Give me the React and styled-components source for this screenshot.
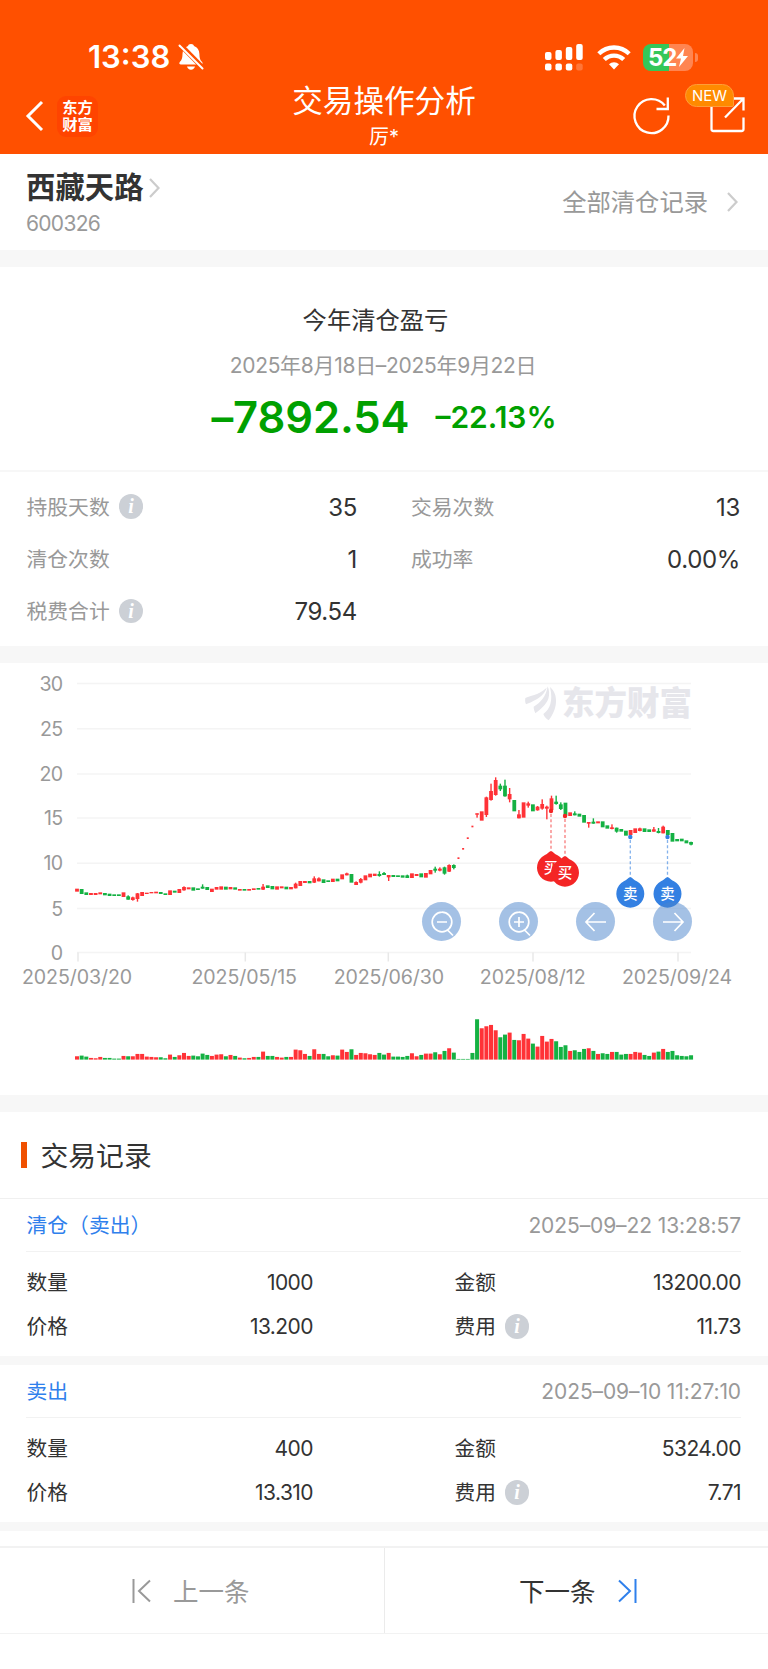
import React from "react";
import styled, { createGlobalStyle } from "styled-components";

const GlobalStyle = createGlobalStyle`
  * { box-sizing: border-box; }
  body {
    margin: 0;
    background: #fff;
    color: #333;
    font-family: Inter, "Noto Sans CJK SC", sans-serif;
  }
`;

const Page = styled.div`
  width: 768px;
  height: 1669px;
  overflow: hidden;
  background: #fff;
`;

const Icon = styled.svg`
  display: block;
  flex: none;
  overflow: visible;
`;

const Spacer = styled.span`
  width: ${(p) => p.$w}px;
  flex: none;
`;

/* ---------- header ---------- */

const Header = styled.header`
  height: 154px;
  background: #ff5000;
  color: #fff;
`;

const StatusBar = styled.div`
  height: 78px;
  padding: 36px 71px 0 88px;
  display: flex;
  justify-content: space-between;
`;

const StatusGroup = styled.div`
  height: 42px;
  display: flex;
  align-items: center;
`;

const Clock = styled.span`
  width: 90px;
  font-size: 31px;
  font-weight: 600;
  line-height: 42px;
`;

const Battery = styled.div`
  position: relative;
  width: 49.5px;
  height: 27px;
  border-radius: 8px;
  background: linear-gradient(90deg, #34c759 52%, #ff8551 52%);
  display: flex;
  align-items: center;
  padding-left: 5px;
  font-size: 24px;
  font-weight: 700;
  letter-spacing: -1.2px;

  &::after {
    content: "";
    position: absolute;
    right: -5px;
    top: 9px;
    width: 3px;
    height: 9px;
    border-radius: 0 4px 4px 0;
    background: #ff8551;
  }
`;

const NavBar = styled.div`
  height: 76px;
  display: grid;
  grid-template-columns: 200px 1fr 200px;
`;

const NavLeft = styled.div`
  display: flex;
  align-items: center;
  gap: 14px;
  height: 76px;
  padding: 0 0 0 26px;
`;

const BrandTile = styled.div`
  width: 41px;
  height: 41px;
  border-radius: 9px;
  background: #ff4400;
  display: flex;
  flex-direction: column;
  align-items: center;
  justify-content: center;
  font: 700 15.3px/17px "Liberation Sans", "Noto Sans CJK SC", sans-serif;
`;

const NavTitles = styled.div`
  padding-top: 1px;
  text-align: center;
`;

const NavTitle = styled.div`
  font-size: 30.6px;
  line-height: 44px;
`;

const NavSubtitle = styled.div`
  font-size: 20px;
  line-height: 29px;
`;

const NavRight = styled.div`
  position: relative;
  display: flex;
  align-items: center;
  justify-content: flex-end;
  gap: 40px;
  height: 76px;
  padding: 0 23px 2px 0;
`;

const NewBadge = styled.span`
  position: absolute;
  left: 117px;
  top: 6px;
  width: 49px;
  height: 23px;
  border-radius: 12px 12px 2px 12px;
  background: #ff8a00;
  border: 1px solid #ff9d38;
  font-size: 15px;
  font-weight: 400;
  line-height: 21.5px;
  text-align: center;
`;

/* ---------- stock ---------- */

const StockBar = styled.section`
  height: 96px;
  padding: 0 30px 0 26px;
  display: flex;
  justify-content: space-between;
`;

const StockName = styled.div`
  height: 40px;
  margin-top: 14px;
  display: flex;
  align-items: center;
  gap: 5px;
  font-size: 29.4px;
  font-weight: 700;
  line-height: 40px;
`;

const StockCode = styled.div`
  margin-top: 1px;
  font-size: 21px;
  line-height: 29px;
  letter-spacing: -0.7px;
  color: #999;
`;

const AllRecords = styled.div`
  display: flex;
  align-items: center;
  gap: 19px;
  height: 96px;
  font-size: 24.3px;
  color: #999;
`;

const RaisedText = styled.span`
  padding-bottom: ${(p) => p.$by * 2}px;
`;

const Band = styled.div`
  height: ${(p) => p.$h}px;
  background: #f7f7f7;
`;

/* ---------- summary ---------- */

const Summary = styled.section`
  height: 205px;
  padding-top: 35px;
  border-bottom: 2px solid #f7f7f7;
  display: flex;
  flex-direction: column;
  align-items: center;
`;

const SummaryTitle = styled.div`
  padding-right: 17px;
  font-size: 24.3px;
  line-height: 36px;
`;

const SummaryRange = styled.div`
  margin-top: 13px;
  padding-right: 2px;
  font-size: 21px;
  line-height: 30px;
  letter-spacing: -0.3px;
  color: #999;
`;

const ProfitLine = styled.div`
  margin-top: 8px;
  height: 56px;
  display: flex;
  align-items: center;
  gap: 26px;
  color: #00a000;
  font-weight: 600;
`;

const Profit = styled.span`
  font-size: 43.5px;
  letter-spacing: -0.1px;
`;

const ProfitRate = styled.span`
  font-size: 30px;
`;

const Stats = styled.section`
  height: 174px;
  padding: 9px 28px 0 26px;
  display: grid;
  grid-template-columns: 331px 329.500px;
  grid-auto-rows: 52.2px;
  column-gap: 53.500px;
`;

const Stat = styled.div`
  display: flex;
  align-items: center;
  justify-content: space-between;
`;

const StatLabel = styled.span`
  display: flex;
  align-items: center;
  gap: 9px;
  padding: 0 0 1px 0.5px;
  font-size: 20.8px;
  color: #999;
`;

const StatValue = styled.span`
  font-size: 24px;
  letter-spacing: -0.35px;
`;

const InfoDot = styled.i`
  width: 24.5px;
  height: 24.5px;
  border-radius: 50%;
  background: #ccd0d6;
  color: #fff;
  font: italic 700 20px/24px "Liberation Serif", serif;
  text-align: center;
`;

/* ---------- chart ---------- */

const ChartCard = styled.section`
  position: relative;
  height: 432px;
`;

const ChartControls = styled.div`
  position: absolute;
  left: 422px;
  top: 239px;
  display: flex;
  gap: 38px;
`;

const ControlButton = styled.button`
  width: 39px;
  height: 39px;
  padding: 0;
  border: 0;
  border-radius: 50%;
  background: rgba(73, 132, 204, 0.5);
  display: grid;
  place-items: center;
`;

/* ---------- records ---------- */

const RecordsHeader = styled.div`
  height: 87px;
  padding-left: 21px;
  border-bottom: 1px solid #f0f0f0;
  display: flex;
  align-items: center;
  gap: 13.5px;
  font-size: 27.8px;

  &::before {
    content: "";
    width: 6px;
    height: 26px;
    background: #f05000;
  }
`;

const Record = styled.article`
  height: 157px;
  padding: 0 27px 0 26px;
`;

const RecordHead = styled.div`
  height: 53px;
  border-bottom: 1px solid #f2f2f2;
  display: flex;
  align-items: center;
  justify-content: space-between;
`;

const RecordKind = styled.span`
  padding: 0 0 2px 0.5px;
  font-size: 20.8px;
  color: #2f80ec;
`;

const RecordTime = styled.span`
  font-size: 21px;
  letter-spacing: -0.1px;
  color: #999;
`;

const RecordGrid = styled.div`
  padding-top: 9px;
  display: grid;
  grid-template-columns: 287px 287px;
  grid-auto-rows: 43.6px;
  column-gap: 141px;
`;

const RecordField = styled.div`
  display: flex;
  align-items: center;
  justify-content: space-between;
  font-size: 21px;
  letter-spacing: -0.55px;
`;

const FieldLabel = styled.span`
  display: flex;
  align-items: center;
  gap: 9px;
  padding-left: 0.5px;
  font-size: 20.7px;
  letter-spacing: 0;
`;

const Pager = styled.nav`
  height: 88px;
  margin-top: 15px;
  border-top: 2px solid #f2f2f2;
  border-bottom: 1px solid #f2f2f2;
  display: grid;
  grid-template-columns: 1fr 1fr;
`;

const PagerItem = styled.div`
  display: flex;
  align-items: center;
  padding-left: ${(p) => p.$inset}px;
  gap: 22px;
  font-size: 25.5px;
  color: ${(p) => p.$color};
  border-left: ${(p) => (p.$divided ? "1px solid #ebebeb" : "0")};
`;

/* ---------- data ---------- */

/* Distances are in thirds of a pixel below the top of the plot: open/close edges, then optional wick ends. */
const CANDLES = `r686-695 g687-702 g697-705 r699-705 r699-705 r697-703 g699-706 g701-708 g703-708 g703-708
r697-711 g709-719/706-719 r712-720/710-722 r700-717/699-725 r696-708 r698-702 r696-700 r695-700 g696-702 g700-705
r691-705 g692-698 r687-699 r681-691/679-692 r682-688 g682-692 g685-690 g680-686/673-686 g681-690 r686-696
r681-689 r679-689 g680-689 r681-688 g682-689 r687-692 g687-692 r687-692 r685-690 g684-689
r680-689/672-690 g676-684 g678-688 r679-689 r679-685 g680-688 r681-688 r671-685/668-685 r663-678 r663-669
g663-670 r655-668/649-669 r655-664/652-664 g658-669 g661-666 r656-666 g656-664 r643-658 r640-646/638-646 g642-668
r666-675/664-675 r657-668/654-670 r646-661 r641-652 r641-648 g642-648/634-650 g639-645/636-645 r645-652/645-663 g645-651 g646-651
g646-653 g646-654/644-654 r640-654 r642-648 g640-652 r639-653 r630-643 g626-632/620-638 r626-632/622-634 g622-641/620-644
r615-635/613-636 g615-624/613-628 r592-597 r564-569 r532-537 r497-502 r460-464/460-473 r454-482 r412-465/410-471 r393-420/371-422
r360-405/352-407 g377-388/371-393 g377-409/359-410 r402-418/384-427 g420-454 r463-475/450-475 r427-473 r430-437/425-443 g433-454 r440-451/438-452
r432-446/418-449 r440-446/437-478 r415-450/407-455 g425-432/407-434 g433-447/427-450 g428-467 r457-468 g460-466/454-466 g461-470 g465-488
r486-491/486-503 g485-491/475-491 r484-490 g484-502 g496-506 r502-507/493-508 g503-515/503-518 g507-515 g512-527 r510-525
r505-519 r505-513/503-514 g505-516 g508-516 r508-515/501-515 g513-519/504-520 r500-520/497-520 g510-525/510-529 g519-545 g537-544
g536-544 g541-550 g546-554/545-556`
  .split(/\s+/)
  .map((s) => {
    const [body, wick] = s.slice(1).split("/").map((r) => r.split("-").map(Number));
    return { up: s[0] === "r", body, wick };
  });

const VOLUMES = `r10 g12 g9 r5 r4 r8 g5 g5 g3 g3 r11 g10 r10 r17 r17 r9 r8 r7 g7 g4 r15 g8 r13 r20 r11 g12 g10 g18 g14 r11
r15 r16 g10 r14 g11 r6 g4 r5 r8 g8 r24 g11 g11 r8 r6 g8 r8 r30 r28 r17 g11 r31 r17 g17 g10 r13 g12 r30 r23 g31
r14 r20 r19 r16 r14 g20 g15 r20 g9 g9 g8 g11 r19 r10 g14 r18 r18 g22 r16 g26 r34 g21 g2 g2 g2 g20 g121 r94 r100 r104
r88 g67 g75 r81 g59 r58 r77 r63 g48 r39 r71 r54 r62 g55 g38 g43 r26 g28 g23 g32 r34 g26 r17 g19 g17 r23 g23 g15 g17 r17
r23 r21 g14 g11 r21 g24 r32 g23 g26 g13 g11 g10 g13`
  .split(/\s+/)
  .map((s) => ({ up: s[0] === "r", h: Number(s.slice(1)) / 3 }));

const GRID = [
  [30, 20.5],
  [25, 65.8],
  [20, 111],
  [15, 155],
  [10, 200.2],
  [5, 245.5],
  [0, 289.5],
];

const DATES = [
  ["2025/03/20", 78, 77],
  ["2025/05/15", 245.3, 244.2],
  ["2025/06/30", 388.3, 388.8],
  ["2025/08/12", 533, 532.7],
  ["2025/09/24", 678, 677],
];

const TRADES = [
  { x: 551, y: 148, text: "买", color: "#f42525" },
  { x: 565, y: 153, text: "买", color: "#f42525" },
  { x: 630.3, y: 174, text: "卖", color: "#3380e2" },
  { x: 667.5, y: 174, text: "卖", color: "#3380e2" },
];

const RED = "#ff3237";
const GREEN = "#14b143";
const barX = (i) => 77 + i * 4.652;

const RECORDS = [
  { kind: "清仓（卖出）", time: "2025–09–22 13:28:57", qty: "1000", amount: "13200.00", price: "13.200", fee: "11.73" },
  { kind: "卖出", time: "2025–09–10 11:27:10", qty: "400", amount: "5324.00", price: "13.310", fee: "7.71" },
];

const STATS = [
  ["持股天数", "35", true],
  ["交易次数", "13"],
  ["清仓次数", "1"],
  ["成功率", "0.00%"],
  ["税费合计", "79.54", true],
];

/* ---------- parts ---------- */

const Chevron = () => (
  <Icon width="11" height="20" viewBox="0 0 11 20" fill="none" stroke="#ccc" strokeWidth="2.2">
    <path d="M1 1l8.5 9L1 19" />
  </Icon>
);

const Info = () => <InfoDot>i</InfoDot>;

function BellOff() {
  return (
    <Icon width="26" height="28" viewBox="0 0 26 28">
      <path
        fill="#fff"
        d="M13 1c1.8 0 2.7.9 3 2 3.500 1.200 5.300 4.200 5.400 8 .1 4.500 1 6.300 2.700 8 1 1.200.4 2.500-1.100 2.500H3c-1.600 0-2.200-1.300-1.200-2.500 1.700-1.700 2.600-3.500 2.700-8 .1-3.800 2-6.800 5.500-8 .3-1.100 1.200-2 3-2zM9 23.500h8c-.5 2-2 3.200-4 3.200s-3.500-1.200-4-3.200z"
      />
      <path d="M2 1.500L26 26" stroke="#ff5000" strokeWidth="5" />
      <path d="M1.500 2.500L24.500 25.500" stroke="#fff" strokeWidth="2" strokeLinecap="round" />
    </Icon>
  );
}

function Signal() {
  const tops = [8, 6, 3, 0];
  return (
    <Icon width="39" height="27" viewBox="0 0 39 27" fill="#fff">
      {tops.map((t, i) => (
        <g key={t}>
          <rect x={i * 10.4} y={t} width="6.500" height={16 - t} rx="2" />
          <rect x={i * 10.4} y="19.500" width="6.500" height="7" rx="2" opacity={i === 3 ? 0.22 : 1} />
        </g>
      ))}
    </Icon>
  );
}

function Wifi() {
  return (
    <Icon width="34" height="25" viewBox="0 0 34 25" fill="none" stroke="#fff" strokeWidth="4.300">
      <path d="M1.800 8.800a21.500 21.500 0 0 1 30.400 0" />
      <path d="M7.300 14.600a13.700 13.700 0 0 1 19.400 0" />
      <path d="M12 19.300a7.100 7.100 0 0 1 10 0L17 24.500z" fill="#fff" stroke="none" />
    </Icon>
  );
}

function PriceChart() {
  return (
    <Icon width="768" height="432" viewBox="0 0 768 432" fontSize="19.600">
      {GRID.map(([label, y]) => (
        <g key={label}>
          <path d={`M77 ${y}H691`} stroke="#f4f4f4" strokeWidth="1.500" />
          <text x="62.500" y={y + 7} textAnchor="end" fill="#999" letterSpacing="-0.700">
            {label}
          </text>
        </g>
      ))}
      {DATES.map(([label, tick, x]) => (
        <g key={label}>
          <path d={`M${tick} 289.500v9`} stroke="#e8e8e8" strokeWidth="1.500" />
          <text x={x} y="320.800" textAnchor="middle" fill="#999" letterSpacing="-0.100">
            {label}
          </text>
        </g>
      ))}

      <g fill="#e6e6eb">
        <g transform="translate(500 7) scale(.33333)">
          <path d="M76 84C90 76 112 78 140 53C136 66 124 80 110 88C98 95 88 100 78 103C75 97 75 90 76 84z" />
          <path d="M143 49C148 60 149 74 145 86C138 104 122 117 106 130C103 122 101 117 101 110C122 98 138 80 143 49z" />
          <path d="M150 51C163 62 169 78 168 96C167 118 157 136 146 151C138 146 133 140 130 132C150 118 160 92 150 51z" />
        </g>
        <text x="562" y="51.500" fontFamily="Noto Sans CJK SC" fontSize="32.500" fontWeight="900">
          东方财富
        </text>
      </g>

      {CANDLES.map(({ up, body, wick }, i) => {
        const x = barX(i);
        const dot = i >= 82 && i <= 85;
        return (
          <g key={i} fill={up ? RED : GREEN}>
            <rect
              x={x - (dot ? 1 : 1.9)}
              y={body[0] / 3 - 3}
              width={dot ? 2 : 3.8}
              height={(body[1] - body[0]) / 3}
            />
            {wick && <rect x={x - 0.7} y={wick[0] / 3 - 3} width="1.400" height={(wick[1] - wick[0]) / 3} />}
          </g>
        );
      })}

      {VOLUMES.map(({ up, h }, i) => (
        <rect key={i} x={barX(i) - 2} y={396.6 - h} width="4" height={h} fill={up ? RED : GREEN} />
      ))}

      {TRADES.map(({ x, y, text, color }) => (
        <g key={x} fill={color}>
          <circle cx={x} cy={y} r="2.200" />
          <path d={`M${x} ${y + 3}v37`} stroke={color} strokeWidth="1.300" strokeDasharray="3 2.300" opacity=".6" />
          <path
            d={`M${x} ${y + 40}c1 0 4 3.200 6.500 4.300A14 14 0 1 1 ${x - 6.5} ${y + 44.3}c2.500-1.100 5.500-4.300 6.500-4.300z`}
          />
          <text
            x={x}
            y={y + 61.5}
            textAnchor="middle"
            fill="#fff"
            fontSize="14.500"
            fontWeight="500"
            fontFamily="Noto Sans CJK SC"
          >
            {text}
          </text>
        </g>
      ))}
    </Icon>
  );
}

const CONTROL_PATHS = {
  "zoom-out": "M9 11h10M20 19.500l5 5M14 1.200a9.800 9.800 0 1 0 0 19.600a9.800 9.800 0 1 0 0-19.600",
  "zoom-in": "M9 11h10M14 6v10M20 19.500l5 5M14 1.200a9.800 9.800 0 1 0 0 19.600a9.800 9.800 0 1 0 0-19.600",
  left: "M24 11H4M12.500 2L4 11l8.500 9",
  right: "M4 11h20M15.500 2l8.500 9-8.500 9",
};

export default function App() {
  return (
    <Page>
      <GlobalStyle />
      <Header>
        <StatusBar>
          <StatusGroup>
            <Clock>13:38</Clock>
            <BellOff />
          </StatusGroup>
          <StatusGroup>
            <Signal />
            <Spacer $w={12.5} />
            <Wifi />
            <Spacer $w={12.5} />
            <Battery>
              52
              <Icon width="12" height="19" viewBox="0 0 12 19" fill="#fff">
                <path d="M8.500 0L0 10.500h5L3 19l9-11H7z" />
              </Icon>
            </Battery>
            <Spacer $w={4.5} />
          </StatusGroup>
        </StatusBar>
        <NavBar>
          <NavLeft>
            <Icon width="17" height="30" viewBox="0 0 17 30" fill="none" stroke="#fff" strokeWidth="3">
              <path d="M16 1L2 15l14 14" />
            </Icon>
            <BrandTile>
              <span>东方</span>
              <span>财富</span>
            </BrandTile>
          </NavLeft>
          <NavTitles>
            <NavTitle>交易操作分析</NavTitle>
            <NavSubtitle>厉*</NavSubtitle>
          </NavTitles>
          <NavRight>
            <Icon width="37" height="36" viewBox="0 0 37 36" fill="none" stroke="#fff" strokeWidth="2.300">
              <path d="M35.500 18.500A17 17 0 1 1 31.800 8.500M34.800 .5V12H23.500" />
            </Icon>
            <Icon width="35" height="36" viewBox="0 0 35 36" fill="none" stroke="#fff" strokeWidth="2.300">
              <path d="M1.500 9v23a2 2 0 0 0 2 2h28a2 2 0 0 0 2-2V20.500M22 1.500h11.500V13.500M33 2L15 20.500" />
            </Icon>
            <NewBadge>NEW</NewBadge>
          </NavRight>
        </NavBar>
      </Header>

      <StockBar>
        <div>
          <StockName>
            西藏天路
            <Chevron />
          </StockName>
          <StockCode>600326</StockCode>
        </div>
        <AllRecords>
          <RaisedText $by={2}>全部清仓记录</RaisedText>
          <Chevron />
        </AllRecords>
      </StockBar>
      <Band $h={17} />

      <Summary>
        <SummaryTitle>今年清仓盈亏</SummaryTitle>
        <SummaryRange>2025年8月18日–2025年9月22日</SummaryRange>
        <ProfitLine>
          <Profit>–7892.54</Profit>
          <ProfitRate>–22.13%</ProfitRate>
        </ProfitLine>
      </Summary>
      <Stats>
        {STATS.map(([label, value, info]) => (
          <Stat key={label}>
            <StatLabel>
              <RaisedText $by={0.5}>{label}</RaisedText>
              {info && <Info />}
            </StatLabel>
            <StatValue>{value}</StatValue>
          </Stat>
        ))}
      </Stats>
      <Band $h={17} />

      <ChartCard>
        <PriceChart />
        <ChartControls>
          {Object.entries(CONTROL_PATHS).map(([name, d]) => (
            <ControlButton key={name} aria-label={name}>
              <Icon width="28" height="22" viewBox="0 0 28 22" fill="none" stroke="#fff" strokeWidth="1.700">
                <path d={d} />
              </Icon>
            </ControlButton>
          ))}
        </ChartControls>
      </ChartCard>
      <Band $h={17} />

      <RecordsHeader>
        <RaisedText $by={1.5}>交易记录</RaisedText>
      </RecordsHeader>
      {RECORDS.map((r) => (
        <React.Fragment key={r.time}>
          <Record>
            <RecordHead>
              <RecordKind>{r.kind}</RecordKind>
              <RecordTime>{r.time}</RecordTime>
            </RecordHead>
            <RecordGrid>
              <RecordField>
                <FieldLabel>
                  <RaisedText $by={1.5}>数量</RaisedText>
                </FieldLabel>
                {r.qty}
              </RecordField>
              <RecordField>
                <FieldLabel>
                  <RaisedText $by={1.5}>金额</RaisedText>
                </FieldLabel>
                {r.amount}
              </RecordField>
              <RecordField>
                <FieldLabel>
                  <RaisedText $by={1.5}>价格</RaisedText>
                </FieldLabel>
                {r.price}
              </RecordField>
              <RecordField>
                <FieldLabel>
                  <RaisedText $by={1.5}>费用</RaisedText>
                  <Info />
                </FieldLabel>
                {r.fee}
              </RecordField>
            </RecordGrid>
          </Record>
          <Band $h={9} />
        </React.Fragment>
      ))}

      <Pager>
        <PagerItem $inset={132} $color="#999">
          <Icon width="19" height="24" viewBox="0 0 19 24" fill="none" stroke="#999" strokeWidth="2">
            <path d="M1.500 0v24M18 1.500L7 12l11 10.500" />
          </Icon>
          <RaisedText $by={1.5}>上一条</RaisedText>
        </PagerItem>
        <PagerItem $inset={134} $color="#333" $divided>
          <RaisedText $by={1.5}>下一条</RaisedText>
          <Icon width="19" height="24" viewBox="0 0 19 24" fill="none" stroke="#2f80ec" strokeWidth="2">
            <path d="M17.500 0v24M1 1.500L12 12 1 22.500" />
          </Icon>
        </PagerItem>
      </Pager>
    </Page>
  );
}
